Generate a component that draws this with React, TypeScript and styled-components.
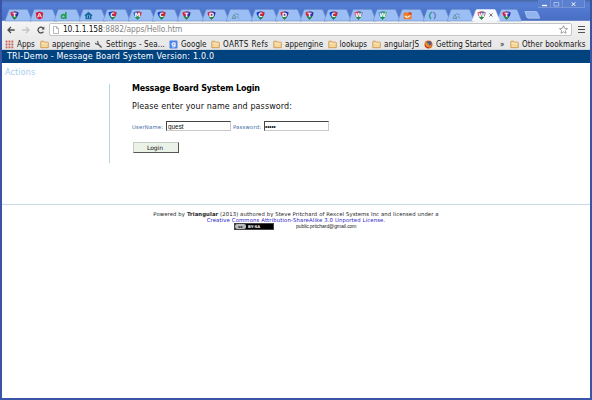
import React from "react";
import styled, { createGlobalStyle, css } from "styled-components";

const Global = createGlobalStyle`
  * { box-sizing: border-box; }
  html, body { margin: 0; padding: 0; overflow: hidden; }
  body { font-family: "DejaVu Sans", Verdana, sans-serif; }
  svg { display: block; flex: none; }
`;

const Window = styled.div`
  width: 592px;
  height: 400px;
  display: flex;
  flex-direction: column;
  background: #fff;
  border: 2px solid #3b55a6;
  border-top: 0;
  overflow: hidden;
`;

const TitleBar = styled.header`
  position: relative;
  height: 21px;
  flex: none;
  display: flex;
  align-items: flex-end;
  padding-left: 3px;
  background: linear-gradient(#46669f 0, #5378c8 2px, #557fd6 5px, #5079cf 9px, #4a6fc5 20px, #86a0c8 21px);
`;

const TabBox = styled.div<{ $w: number; $active?: boolean }>`
  position: relative;
  width: ${(p) => p.$w}px;
  height: 12px;
  flex: none;
  & > svg:first-child { position: absolute; left: 0; top: 0; overflow: visible; }
  z-index: ${(p) => (p.$active ? 2 : 1)};
`;

const TabContent = styled.div`
  position: relative;
  display: flex;
  align-items: center;
  height: 12px;
  padding-left: 5px;
  gap: 3px;
`;

const NewTab = styled.div`
  height: 12px;
  padding: 2px 0 0 4px;
`;

const WindowButtons = styled.div`
  position: absolute;
  right: 5px;
  top: 0;
  display: flex;
`;

const WindowButton = styled.div<{ $w: number }>`
  width: ${(p) => p.$w}px;
  height: 8px;
  display: flex;
  justify-content: center;
  border: 1px solid #7795d4;
  border-top: 0;
  border-left-width: 0;
  background: #5a80cf;
`;

const Toolbar = styled.div`
  height: 17px;
  flex: none;
  display: flex;
  align-items: center;
  padding: 0 5px 0 4px;
  background: linear-gradient(#f4f4f4, #ebebeb);
`;

const NavIcons = styled.div`
  width: 43px;
  display: flex;
  gap: 7px;
  padding-left: 1px;
`;

const AddressBar = styled.div`
  width: 524px;
  height: 13px;
  display: flex;
  align-items: center;
  padding: 0 3px;
  background: #fff;
  border: 1px solid #c4c4c4;
  border-radius: 2px;
`;

const Url = styled.div`
  flex: 1;
  padding-left: 4px;
  font: 8.4px/11px "DejaVu Sans Condensed", "DejaVu Sans", sans-serif;
  letter-spacing: -0.09px;
  color: #858585;
  b { font-weight: 400; color: #111; }
`;

const MenuIcon = styled.div`
  width: 7px;
  height: 7px;
  margin-left: 6px;
  border-top: 1.5px solid #555;
  border-bottom: 1.5px solid #555;
  display: flex;
  align-items: center;
  &::after { content: ""; width: 100%; height: 1px; background: #444; }
`;

const BookmarkBar = styled.nav`
  height: 12px;
  flex: none;
  display: flex;
  align-items: center;
  padding: 1px 0 0 3px;
  background: linear-gradient(#ebebeb, #e6e6e6);
  box-shadow: inset 0 -1px #cfd5db;
`;

const Bookmark = styled.div<{ $w: number; $ls?: number }>`
  width: ${(p) => p.$w}px;
  flex: none;
  display: flex;
  align-items: center;
  gap: 3px;
  font: 8px/11px "DejaVu Sans Condensed", "DejaVu Sans", sans-serif;
  letter-spacing: ${(p) => p.$ls ?? 0}px;
  white-space: nowrap;
  color: #141414;
  & > svg { width: 9px; height: 9px; }
`;

const Banner = styled.div`
  height: 13px;
  flex: none;
  padding-left: 5px;
  background: #00437f;
  color: #fff;
  font-size: 8px;
  line-height: 13px;
  letter-spacing: 0.19px;
`;

const Body = styled.main`
  height: 142px;
  flex: none;
  display: flex;
  border-bottom: 1px solid #c3dbe5;
`;

const Sidebar = styled.aside`
  width: 108px;
  height: 79px;
  margin-top: 21px;
  border-right: 1px solid #b4d2ea;
`;

const Actions = styled.div`
  margin-top: -17px;
  padding-left: 3px;
  font-size: 8px;
  line-height: 12px;
  letter-spacing: 0.15px;
  color: #a3cdf0;
`;

const LoginPanel = styled.section`
  padding: 20px 0 0 22px;
`;

const Heading = styled.h1`
  margin: 0;
  font-size: 8px;
  line-height: 12px;
  letter-spacing: -0.18px;
  color: #000;
`;

const Prompt = styled.p`
  margin: 6px 0 8px;
  font-size: 8px;
  line-height: 12px;
  letter-spacing: 0.1px;
  color: #111;
`;

const Fields = styled.div`
  display: flex;
  align-items: center;
  height: 10px;
`;

const FieldLabel = styled.label<{ $w: number }>`
  width: ${(p) => p.$w}px;
  font-size: 5.3px;
  line-height: 10px;
  padding-top: 1px;
  letter-spacing: 0.2px;
  white-space: nowrap;
  color: #3a6ca6;
`;

const inputLook = css`
  height: 10px;
  padding: 0 1px;
  outline: 0;
  border: 1px solid #c9c9c9;
  border-top-color: #444;
  border-left-color: #444;
  border-radius: 0;
  background: #fff;
  color: #111;
`;

const Input = styled.input`
  ${inputLook}
  width: 65px;
  font: 6.4px/8px "Liberation Sans", Arial, sans-serif;
  &[type="password"] { letter-spacing: -0.1px; padding-left: 0; }
`;

const LoginButton = styled.button`
  display: block;
  width: 46px;
  height: 11px;
  margin-top: 11px;
  margin-left: 1px;
  padding: 0 2px 0 0;
  border: 1px solid #c5cbc5;
  border-right-color: #555;
  border-bottom-color: #555;
  background: #ebf2e8;
  font: 6px/9px "DejaVu Sans", sans-serif;
  color: #111;
`;

const Footer = styled.footer`
  width: 588px;
  padding-top: 6px;
  text-align: center;
  font-size: 5.3px;
  line-height: 6px;
  letter-spacing: 0.105px;
  color: #222;
`;

const License = styled.div`
  letter-spacing: 0.14px;
  color: #2a20c8;
`;

const Contact = styled.div`
  display: flex;
  align-items: center;
  height: 7px;
  padding-left: 232px;
  gap: 22px;
  font: 5px/7px "Liberation Sans", Arial, sans-serif;
  letter-spacing: -0.05px;
`;

const Badge = styled.div`
  width: 40px;
  height: 7px;
  display: flex;
  align-items: center;
  background: #000;
  border: 1px solid #444;
  color: #fff;
  font: bold 3.8px/5px "DejaVu Sans", sans-serif;
  letter-spacing: 0;
`;

const BadgeMark = styled.span`
  width: 11px;
  height: 5px;
  margin-right: 2px;
  background: #bbb;
  color: #000;
  border-radius: 2px;
  text-align: center;
`;

const TabShape = ({ w, active }: { w: number; active?: boolean }) => (
  <svg width={w + 3} height="12" viewBox={`0 0 ${w + 3} 12`}>
    <path
      d={`M0 12 L3.8 1.4 Q4.2 .5 5.2 .5 H${w - 3} Q${w - 2} .5 ${w - 1.6} 1.4 L${w + 2.6} 12 Z`}
      fill={active ? "#f8f9fc" : "#9bbff4"}
      stroke={active ? "#e9effa" : "#7191cc"}
      strokeWidth=".6"
    />
  </svg>
);

const shield = (letter: string, a: string, b: string, c: string) => (
  <svg width="9" height="9" viewBox="0 0 9 9">
    <path d="M.6 1.6 Q4.5 -.6 8.4 1.6 Q8.8 4.2 4.5 8.7 Q.2 4.2 .6 1.6Z" fill={a} />
    <path d="M4.5 .4 Q7 .5 8.4 1.6 Q8.7 4 6.3 6.8 L4.5 4Z" fill={b} />
    <path d="M1.9 5.8 L4.5 4.4 L7.1 5.8 L4.5 8.7Z" fill={c} />
    <text x="4.5" y="6" textAnchor="middle" fontFamily="DejaVu Sans" fontWeight="700" fontSize="6" fill="#fff">
      {letter}
    </text>
  </svg>
);

const tabIcons: Record<string, React.ReactNode> = {
  T: shield("T", "#d5202e", "#1836b0", "#129544"),
  T2: shield("T", "#d5202e", "#1836c8", "#129544"),
  C: shield("C", "#1836c0", "#d5202e", "#129544"),
  D: shield("D", "#d5202e", "#1836c0", "#129544"),
  M: shield("M", "#2c50bb", "#d5202e", "#169a48"),
  W: shield("W", "#d5202e", "#2d63b0", "#129544"),
  G: shield("W", "#3178b5", "#159a55", "#129544"),
  angular: (
    <svg width="9" height="9" viewBox="0 0 9 9">
      <path d="M.8 1.8 L4.5 .5 L8.2 1.8 L7.5 7 L4.5 8.6 L1.5 7Z" fill="#d3203a" />
      <path d="M2.5 6.3 L4.5 2 L6.5 6.3 M3.3 5h2.4" fill="none" stroke="#fff" strokeWidth=".9" />
    </svg>
  ),
  dart: (
    <svg width="9" height="9" viewBox="0 0 9 9">
      <path d="M6.8 1 V8 M6.5 4.8 Q4.5 2.8 2.6 4.4 Q1.6 7.5 4.4 7.2 Q6.4 7 6.5 4.8Z" fill="none" stroke="#23a04b" strokeWidth="1.6" />
    </svg>
  ),
  home: (
    <svg width="9" height="9" viewBox="0 0 9 9">
      <path d="M.7 4 L4.5 .8 L8.3 4 V5 H7.5 V8.2 H1.5 V5 H.7Z" fill="#19699f" />
      <path d="M3 4.2h3v3H3Z" fill="#6daedb" /><path d="M4.5 4.5V7" stroke="#104c82" />
    </svg>
  ),
  nodes: (
    <svg width="9" height="9" viewBox="0 0 9 9">
      <path d="M1 7.5 L3 3.5 L5 7.5Z M4 2.5 L8 4 M6 5 L8 7.5" stroke="#6597b9" strokeWidth="1" fill="#8dbbc9" />
    </svg>
  ),
  orange: (
    <svg width="9" height="9" viewBox="0 0 9 9">
      <rect x=".5" y="1.5" width="8" height="6.8" rx="1" fill="#ee7c28" />
      <path d="M5.3 1.5H8.5V3.5H6Z" fill="#d63d24" />
      <path d="M2 5 Q4.5 7.8 7 4.5" fill="none" stroke="#fff" strokeWidth="1.2" />
    </svg>
  ),
  ring: (
    <svg width="9" height="9" viewBox="0 0 9 9">
      <path d="M4 1 Q-.5 4 3 8" fill="none" stroke="#2b9b99" strokeWidth="1.5" />
      <path d="M5 1 Q9.5 4 6 8" fill="none" stroke="#6b83b8" strokeWidth="1.5" />
    </svg>
  ),
};

const tabs = [
  "T", "angular", "dart", "home", "C", "M", "C", "T", "D", "nodes", "C", "D", "T", "C", "W", "G", "orange", "ring", "nodes",
];

const Folder = () => (
  <svg viewBox="0 0 9 9">
    <path d="M.8 7.7 V1.7 Q.8 1.2 1.3 1.2 H3.7 L4.5 2.2 H7.8 Q8.3 2.2 8.3 2.7 V7.7Z" fill="#f7d79c" stroke="#c68e43" strokeWidth=".8" />
    <path d="M1.4 3.3H7.8" stroke="#fff0cb" strokeWidth=".6" />
  </svg>
);

const AppsIcon = () => (
  <svg viewBox="0 0 9 9">
    {[0, 1, 2].map((r) =>
      [0, 1, 2].map((c) => (
        <rect key={`${r}${c}`} x={0.6 + c * 2.9} y={0.6 + r * 2.9} width="1.9" height="1.9" fill={["#d8604f", "#b76565", "#cc6b50"][r]} />
      ))
    )}
  </svg>
);

const Wrench = () => (
  <svg viewBox="0 0 9 9">
    <path d="M3.5 3.5 L7.6 7.6" stroke="#555" strokeWidth="1.4" />
    <path d="M1.4 2.8 Q1.8 4.5 3.8 4 Q4.8 2 3 1.2" fill="none" stroke="#555" strokeWidth="1.1" />
  </svg>
);

const GoogleIcon = () => (
  <svg viewBox="0 0 9 9">
    <rect x=".5" y=".5" width="8" height="8" rx=".8" fill="#4a80e8" />
    <text x="4.5" y="6.4" textAnchor="middle" fontFamily="DejaVu Sans" fontWeight="700" fontSize="6.5" fill="#fff">g</text>
  </svg>
);

const Firefox = () => (
  <svg viewBox="0 0 9 9">
    <circle cx="4.5" cy="4.6" r="4" fill="#dd6720" />
    <circle cx="5" cy="3.6" r="2.4" fill="#3c5e9d" />
    <path d="M1 2 L2 1.2 L3 3 L5 4 Q4 6 7.5 5.5 Q5 8.5 2 6.5Z" fill="#e88a2c" />
    <path d="M1 5 Q2 8 5 8" stroke="#b93724" fill="none" />
  </svg>
);

export default function App() {
  return (
    <>
      <Global />
      <Window>
        <TitleBar>
          {tabs.map((t, i) => (
            <TabBox key={i} $w={24.57}>
              <TabShape w={24.57} />
              <TabContent>{tabIcons[t]}</TabContent>
            </TabBox>
          ))}
          <TabBox $w={25.2} $active>
            <TabShape w={25.2} active />
            <TabContent>
              {tabIcons.W}
              <svg width="4" height="4" viewBox="0 0 4 4"><path d="M.4 .4 L3.6 3.6 M3.6 .4 L.4 3.6" stroke="#6e5a72" strokeWidth=".9" /></svg>
            </TabContent>
          </TabBox>
          <TabBox $w={23}>
            <TabShape w={22} />
            <TabContent>{tabIcons.T2}</TabContent>
          </TabBox>
          <NewTab>
            <svg width="17" height="8" viewBox="0 0 17 8">
              <path d="M.8 .5 H12 Q13 .5 13.4 1.4 L15.8 7.2 H4.3 Q3.3 7.2 2.9 6.3Z" fill="#91b4f0" stroke="#bad0f5" strokeWidth=".7" />
            </svg>
          </NewTab>
          <WindowButtons>
            <WindowButton $w={13}>
              <svg width="7" height="7" viewBox="0 0 7 7"><path d="M1 5.5H6" stroke="#fff" strokeWidth="1.3" /></svg>
            </WindowButton>
            <WindowButton $w={12}>
              <svg width="7" height="7" viewBox="0 0 7 7"><path d="M1 2.5H5.8V6H1Z" fill="none" stroke="#b3c9f1" strokeWidth=".8" /></svg>
            </WindowButton>
            <WindowButton $w={22}>
              <svg width="7" height="7" viewBox="0 0 7 7"><path d="M1.7 2.3L5.3 6M5.3 2.3L1.7 6" stroke="#fff" strokeWidth="1" /></svg>
            </WindowButton>
          </WindowButtons>
        </TitleBar>
        <Toolbar>
          <NavIcons>
            <svg width="8" height="8" viewBox="0 0 8 8"><path d="M7.7 4H1M4 1L1 4L4 7" fill="none" stroke="#4c4c4c" strokeWidth="1.3" /></svg>
            <svg width="8" height="8" viewBox="0 0 8 8"><path d="M.3 4H7M4 1L7 4L4 7" fill="none" stroke="#c4c4c4" strokeWidth="1.3" /></svg>
            <svg width="8" height="8" viewBox="0 0 8 8"><path d="M6.4 5.6A2.9 2.9 0 1 1 5.8 1.8" fill="none" stroke="#444" strokeWidth="1.3" /><path d="M7.3 .5V3.6H4.3Z" fill="#444" /></svg>
          </NavIcons>
          <AddressBar>
            <svg width="6" height="8" viewBox="0 0 6 8"><path d="M.5 .5H3.6L5.5 2.4V7.5H.5ZM3.5 .5V2.5H5.5" fill="#fff" stroke="#9b9b9b" strokeWidth=".7" /></svg>
            <Url><b>10.1.1.158</b>:8882/apps/Hello.htm</Url>
            <svg width="9" height="9" viewBox="0 0 10 10"><path d="M5 .7L6.3 3.7L9.5 4L7.1 6.1L7.8 9.3L5 7.6L2.2 9.3L2.9 6.1L.5 4L3.7 3.7Z" fill="#fff" stroke="#858585" strokeWidth=".8" /></svg>
          </AddressBar>
          <MenuIcon />
        </Toolbar>
        <BookmarkBar>
          <Bookmark $w={35}><AppsIcon />Apps</Bookmark>
          <Bookmark $w={54}><Folder />appengine</Bookmark>
          <Bookmark $w={75} $ls={0.12}><Wrench />Settings - Sea...</Bookmark>
          <Bookmark $w={42}><GoogleIcon />Google</Bookmark>
          <Bookmark $w={62} $ls={0.4}><Folder />OARTS Refs</Bookmark>
          <Bookmark $w={54.5}><Folder />appengine</Bookmark>
          <Bookmark $w={44.5}><Folder />lookups</Bookmark>
          <Bookmark $w={52} $ls={0.1}><Folder />angularJS</Bookmark>
          <Bookmark $w={76}><Firefox />Getting Started</Bookmark>
          <Bookmark $w={10}>»</Bookmark>
          <Bookmark $w={80} $ls={0.07}><Folder />Other bookmarks</Bookmark>
        </BookmarkBar>
        <Banner>TRI-Demo - Message Board System Version: 1.0.0</Banner>
        <Body>
          <Sidebar><Actions>Actions</Actions></Sidebar>
          <LoginPanel>
            <Heading>Message Board System Login</Heading>
            <Prompt>Please enter your name and password:</Prompt>
            <Fields>
              <FieldLabel htmlFor="user" $w={34}>UserName:</FieldLabel>
              <Input id="user" defaultValue="guest" />
              <FieldLabel htmlFor="pass" $w={33}>&nbsp;Password:</FieldLabel>
              <Input id="pass" type="password" defaultValue="guest" />
            </Fields>
            <LoginButton>Login</LoginButton>
          </LoginPanel>
        </Body>
        <Footer>
          <div>Powered by <b>Triangular</b> (2013) authored by Steve Pritchard of Rexcel Systems Inc and licensed under a</div>
          <License>Creative Commons Attribution-ShareAlike 3.0 Unported License.</License>
          <Contact>
            <Badge><BadgeMark>cc</BadgeMark>BY-SA</Badge>
            public.pritchard@gmail.com
          </Contact>
        </Footer>
      </Window>
    </>
  );
}
